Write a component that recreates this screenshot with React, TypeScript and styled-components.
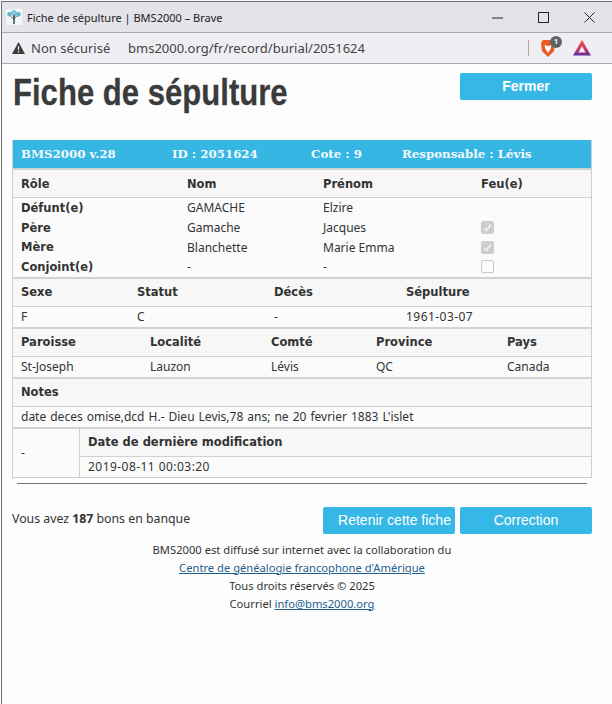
import styled, { createGlobalStyle } from "styled-components";

const GlobalStyle = createGlobalStyle`
	html, body {
		margin: 0;
		padding: 0;
		background: #fdfdfd;
	}
	body {
		width: 612px;
		height: 704px;
		overflow: hidden;
		font-family: "Noto Sans", "Open Sans", sans-serif;
		font-size: 12px;
		color: #333;
	}
`;

const Window = styled.div`
	height: 703px;
	margin: 1px 0 0 1px;
	box-sizing: border-box;
	border-left: 1px solid #6f6f6f;
	border-top: 1px solid #6f6f6f;
	display: flex;
	flex-direction: column;
`;

const TitleBar = styled.div`
	height: 30px;
	flex: none;
	background: #e3e3e9;
	border-bottom: 1px solid #a9a9ad;
	display: flex;
	align-items: center;
	padding-left: 4px;
	font-family: "Noto Sans", sans-serif;
	font-size: 11px;
	color: #222;
`;

const Favicon = styled.svg`
	margin-right: 5px;
`;

const PageTitle = styled.span`
	flex: 1;
`;

const WindowButton = styled.span`
	width: 46px;
	height: 30px;
	display: flex;
	align-items: center;
	justify-content: center;
`;

const AddressBar = styled.div`
	height: 30px;
	flex: none;
	background: #eeeef3;
	border-bottom: 1px solid #a9a9ad;
	display: flex;
	align-items: center;
	padding-left: 10px;
	font-size: 13px;
	color: #444;
`;

const Insecure = styled.span`
	display: flex;
	align-items: center;
	gap: 6px;
	width: 116px;
	flex: none;
`;

const Url = styled.span`
	flex: 1;
`;

const Extensions = styled.div`
	display: flex;
	align-items: center;
	width: 84px;
	flex: none;
`;

const Divider = styled.span`
	width: 1px;
	height: 16px;
	background: #b0a8a0;
	margin-right: 11px;
`;

const BraveIcon = styled.span`
	position: relative;
	width: 16px;
	height: 19px;
	margin-right: 17px;
	display: block;
`;

const Badge = styled.span`
	position: absolute;
	right: -6px;
	top: -3px;
	width: 12px;
	height: 12px;
	border-radius: 50%;
	background: #5f6368;
	color: #fff;
	font-size: 7px;
	font-weight: 700;
	line-height: 12px;
	text-align: center;
`;

const Content = styled.main`
	flex: 1;
	padding: 0 20px 0 10px;
	background: #fdfdfd;
`;

const Heading = styled.div`
	height: 76px;
	display: flex;
	justify-content: space-between;
	padding-top: 9px;
	box-sizing: border-box;
`;

const Title = styled.h1`
	margin: 0 0 0 1px;
	font-family: "Liberation Sans", sans-serif;
	font-size: 37px;
	line-height: 40px;
	font-weight: 700;
	color: #3b3b3b;
	white-space: nowrap;
	transform: scaleX(0.84);
	transform-origin: left center;
	-webkit-text-stroke: 0.3px #3b3b3b;
`;

const Button = styled.button<{ $strong?: boolean; $inset?: boolean }>`
	width: 132px;
	height: 27px;
	flex: none;
	border: 0;
	border-radius: 2px;
	background: #35b8e6;
	color: #fff;
	font-family: "Liberation Sans", sans-serif;
	font-size: 14px;
	font-weight: ${(props) => (props.$strong ? 700 : 400)};
	padding: 0 0 ${(props) => (props.$strong ? "2px" : "0")} ${(props) => (props.$inset ? "11px" : "0")};
	white-space: nowrap;
`;

const Card = styled.section`
	border: 1px solid #cfcfcf;
	border-top: 0;
	background: #f8f8f8;
`;

const Banner = styled.div`
	height: 28px;
	background: #35b6e3;
	border-bottom: 2px solid #c9d3d8;
	display: grid;
	grid-template-columns: 151px 139px 91px 1fr;
	align-items: center;
	padding-left: 8px;
	font-family: "DejaVu Serif", serif;
	font-weight: 700;
	font-size: 11.8px;
	color: #f4fbfe;
`;

const Row = styled.div<{ $cols: string; $head?: boolean; $end?: boolean; $person?: boolean }>`
	display: grid;
	grid-template-columns: ${(props) => props.$cols};
	align-items: center;
	height: ${(props) => (props.$head ? "27px" : props.$person ? "19.7px" : "20px")};
	padding-left: 8px;
	background: ${(props) => (props.$head ? "#f7f7f7" : "#fbfbfb")};
	border-bottom: ${(props) =>
		props.$end ? "2px solid #d2d2d2" : props.$head ? "1px solid #d2d2d2" : "0"};
	font-weight: ${(props) => (props.$head ? 700 : 400)};
	font-family: ${(props) => (props.$head ? '"DejaVu Sans"' : '"Noto Sans"')}, sans-serif;
	font-size: ${(props) => (props.$head ? "11.5px" : "12px")};
`;

const People = styled.div`
	display: flex;
	flex-direction: column;
	border-bottom: 2px solid #d2d2d2;
	background: #fbfbfb;
`;

const Role = styled.span`
	font-family: "DejaVu Sans", sans-serif;
	font-size: 11.5px;
	font-weight: 700;
`;

const Stamp = styled.span`
	letter-spacing: 0.45px;
`;

const NoteText = styled.span`
	word-spacing: 0.9px;
	white-space: nowrap;
`;

const Check = styled.span<{ $checked?: boolean }>`
	width: 13px;
	height: 13px;
	box-sizing: border-box;
	border-radius: 2px;
	background: ${(props) => (props.$checked ? "#cdcdcd" : "#fbfbfb")};
	border: 1px solid ${(props) => (props.$checked ? "#cdcdcd" : "#c8c8c8")};
	display: flex;
	align-items: center;
	justify-content: center;
`;

const Modified = styled.div`
	display: grid;
	grid-template-columns: 67px 1fr;
`;

const Dash = styled.div`
	border-right: 1px solid #d2d2d2;
	padding-left: 8px;
	display: flex;
	align-items: center;
	background: #fbfbfb;
`;

const Rule = styled.hr`
	margin: 5px 5px 0 5px;
	border: 0;
	border-top: 1px solid #777;
`;

const Actions = styled.div`
	display: flex;
	align-items: center;
	margin-top: 23px;
	gap: 5px;
`;

const Bank = styled.span`
	flex: 1;
	margin-bottom: 4px;
	font-size: 12.3px;
	white-space: nowrap;
`;

const Footer = styled.footer`
	margin-top: 7px;
	text-align: center;
	line-height: 18px;
	font-size: 11.2px;
`;

const FooterLink = styled.a`
	color: #1f5f8f;
	text-decoration: underline;
`;

const CheckMark = () => (
	<svg width="9" height="9" viewBox="0 0 10 10">
		<path d="M1.5 5.5 4 8l4.5-6" fill="none" stroke="#f4f4f4" strokeWidth="1.8" />
	</svg>
);

const people = [
	{ role: "Défunt(e)", nom: "GAMACHE", prenom: "Elzire", feu: null },
	{ role: "Père", nom: "Gamache", prenom: "Jacques", feu: true },
	{ role: "Mère", nom: "Blanchette", prenom: "Marie Emma", feu: true },
	{ role: "Conjoint(e)", nom: "-", prenom: "-", feu: false },
];

const personCols = "166px 136px 158px 1fr";
const civilCols = "116px 137px 132px 1fr";
const placeCols = "129px 121px 105px 131px 1fr";

export default function App() {
	return (
		<>
			<GlobalStyle />
			<Window>
				<TitleBar>
					<Favicon width="16" height="16" viewBox="0 0 18 18">
						<rect width="18" height="18" fill="#f2f6f8" />
						<path d="M9 17V8M9 12 5 8M9 11l4-4M9 9 7 4M9 9l3-5" stroke="#3d4a4d" strokeWidth="1" fill="none" />
						<circle cx="4" cy="6" r="2.6" fill="#63b7c9" />
						<circle cx="14" cy="6" r="2.6" fill="#63b7c9" />
						<circle cx="9" cy="4" r="3" fill="#7cc7d6" />
						<path d="M9 17V7" stroke="#3d4a4d" strokeWidth="1.2" />
					</Favicon>
					<PageTitle>Fiche de sépulture | BMS2000 – Brave</PageTitle>
					<WindowButton>
						<svg width="11" height="11" viewBox="0 0 11 11">
							<path d="M0 6h11" stroke="#222" strokeWidth="1" />
						</svg>
					</WindowButton>
					<WindowButton>
						<svg width="11" height="11" viewBox="0 0 11 11">
							<rect x=".5" y=".5" width="10" height="10" fill="none" stroke="#222" />
						</svg>
					</WindowButton>
					<WindowButton>
						<svg width="11" height="11" viewBox="0 0 11 11">
							<path d="M.5.5l10 10M10.5.5l-10 10" stroke="#222" strokeWidth="1" />
						</svg>
					</WindowButton>
				</TitleBar>
				<AddressBar>
					<Insecure>
						<svg width="13" height="12" viewBox="0 0 13 12">
							<path d="M6.5 0 13 12H0Z" fill="#3c3c3c" />
							<path d="M6.5 4v4M6.5 9v1.5" stroke="#eee" strokeWidth="1.2" />
						</svg>
						Non sécurisé
					</Insecure>
					<Url>bms2000.org/fr/record/burial/2051624</Url>
					<Extensions>
						<Divider />
						<BraveIcon>
							<svg width="16" height="19" viewBox="0 0 16 19">
								<path d="M3 1h10l2 3-1 8-6 6-6-6-1-8Z" fill="#ee5a24" />
								<path d="M4.500 6 8 7l3.500-1-1 4L8 14l-2.500-4Z" fill="#fff" />
							</svg>
							<Badge>1</Badge>
						</BraveIcon>
						<svg width="18" height="16" viewBox="0 0 18 16">
							<defs>
								<linearGradient id="bat" x1="0" y1="0" x2="0" y2="1">
									<stop offset="0" stopColor="#f0502e" />
									<stop offset="0.6" stopColor="#c93a6b" />
									<stop offset="1" stopColor="#5b2d9b" />
								</linearGradient>
							</defs>
							<path d="M9 0 18 15.500H0ZM9 6 5.500 12.500h7Z" fill="url(#bat)" fillRule="evenodd" />
						</svg>
					</Extensions>
				</AddressBar>
				<Content>
					<Heading>
						<Title>Fiche de sépulture</Title>
						<Button $strong>Fermer</Button>
					</Heading>
					<Card>
						<Banner>
							<span>BMS2000 v.28</span>
							<span>ID : 2051624</span>
							<span>Cote : 9</span>
							<span>Responsable : Lévis</span>
						</Banner>
						<Row $head $cols={personCols}>
							<span>Rôle</span>
							<span>Nom</span>
							<span>Prénom</span>
							<span>Feu(e)</span>
						</Row>
						<People>
							{people.map((person) => (
								<Row key={person.role} $person $cols={personCols}>
									<Role>{person.role}</Role>
									<span>{person.nom}</span>
									<span>{person.prenom}</span>
									{person.feu === null ? (
										<span />
									) : (
										<Check $checked={person.feu}>{person.feu && <CheckMark />}</Check>
									)}
								</Row>
							))}
						</People>
						<Row $head $cols={civilCols}>
							<span>Sexe</span>
							<span>Statut</span>
							<span>Décès</span>
							<span>Sépulture</span>
						</Row>
						<Row $end $cols={civilCols}>
							<span>F</span>
							<span>C</span>
							<span>-</span>
							<Stamp>1961-03-07</Stamp>
						</Row>
						<Row $head $cols={placeCols}>
							<span>Paroisse</span>
							<span>Localité</span>
							<span>Comté</span>
							<span>Province</span>
							<span>Pays</span>
						</Row>
						<Row $end $cols={placeCols}>
							<span>St-Joseph</span>
							<span>Lauzon</span>
							<span>Lévis</span>
							<span>QC</span>
							<span>Canada</span>
						</Row>
						<Row $head $cols="1fr">
							<span>Notes</span>
						</Row>
						<Row $end $cols="1fr">
							<NoteText>date deces omise,dcd H.- Dieu Levis,78 ans; ne 20 fevrier 1883 L'islet</NoteText>
						</Row>
						<Modified>
							<Dash>-</Dash>
							<div>
								<Row $head $cols="1fr">
									<span>Date de dernière modification</span>
								</Row>
								<Row $cols="1fr">
									<Stamp>2019-08-11 00:03:20</Stamp>
								</Row>
							</div>
						</Modified>
					</Card>
					<Rule />
					<Actions>
						<Bank>
							Vous avez <b>187</b> bons en banque
						</Bank>
						<Button $inset>Retenir cette fiche</Button>
						<Button>Correction</Button>
					</Actions>
					<Footer>
						BMS2000 est diffusé sur internet avec la collaboration du
						<br />
						<FooterLink href="#">Centre de généalogie francophone d'Amérique</FooterLink>
						<br />
						Tous droits réservés © 2025
						<br />
						Courriel <FooterLink href="#">info@bms2000.org</FooterLink>
					</Footer>
				</Content>
			</Window>
		</>
	);
}
